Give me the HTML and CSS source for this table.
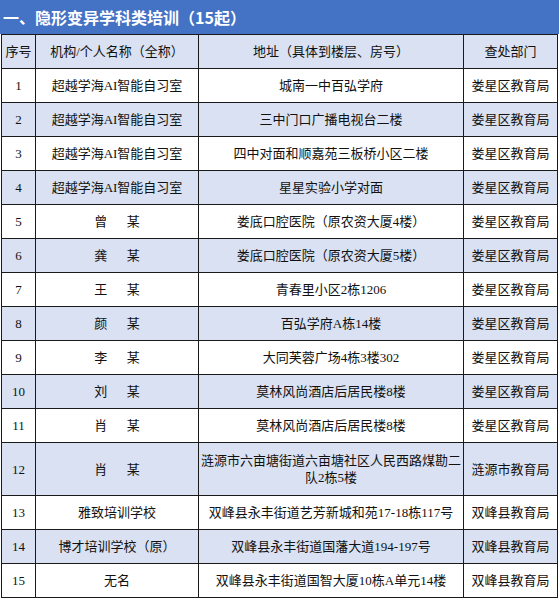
FILE: index.html
```html
<!DOCTYPE html>
<html lang="zh">
<head>
<meta charset="utf-8">
<link rel="stylesheet" href="styles.css">
</head>
<body>
<div class="title">一、隐形变异学科类培训（15起）</div>
<table class="list">
  <colgroup>
    <col class="c-no"><col class="c-name"><col class="c-addr"><col class="c-dept">
  </colgroup>
  <tr class="head"><td>序号</td><td>机构/个人名称（全称）</td><td>地址（具体到楼层、房号）</td><td>查处部门</td></tr>
  <tr><td>1</td><td>超越学海AI智能自习室</td><td>城南一中百弘学府</td><td>娄星区教育局</td></tr>
  <tr class="alt"><td>2</td><td>超越学海AI智能自习室</td><td>三中门口广播电视台二楼</td><td>娄星区教育局</td></tr>
  <tr><td>3</td><td>超越学海AI智能自习室</td><td>四中对面和顺嘉苑三板桥小区二楼</td><td>娄星区教育局</td></tr>
  <tr class="alt"><td>4</td><td>超越学海AI智能自习室</td><td>星星实验小学对面</td><td>娄星区教育局</td></tr>
  <tr><td>5</td><td>曾　&nbsp;&nbsp;某</td><td>娄底口腔医院（原农资大厦4楼）</td><td>娄星区教育局</td></tr>
  <tr class="alt"><td>6</td><td>龚　&nbsp;&nbsp;某</td><td>娄底口腔医院（原农资大厦5楼）</td><td>娄星区教育局</td></tr>
  <tr><td>7</td><td>王　&nbsp;&nbsp;某</td><td>青春里小区2栋1206</td><td>娄星区教育局</td></tr>
  <tr class="alt"><td>8</td><td>颜　&nbsp;&nbsp;某</td><td>百弘学府A栋14楼</td><td>娄星区教育局</td></tr>
  <tr><td>9</td><td>李　&nbsp;&nbsp;某</td><td>大同芙蓉广场4栋3楼302</td><td>娄星区教育局</td></tr>
  <tr class="alt"><td>10</td><td>刘　&nbsp;&nbsp;某</td><td>莫林风尚酒店后居民楼8楼</td><td>娄星区教育局</td></tr>
  <tr><td>11</td><td>肖　&nbsp;&nbsp;某</td><td>莫林风尚酒店后居民楼8楼</td><td>娄星区教育局</td></tr>
  <tr class="alt tall"><td>12</td><td>肖　&nbsp;&nbsp;某</td><td>涟源市六亩塘街道六亩塘社区人民西路煤勘二<br>队2栋5楼</td><td>涟源市教育局</td></tr>
  <tr><td>13</td><td>雅致培训学校</td><td>双峰县永丰街道艺芳新城和苑17-18栋117号</td><td>双峰县教育局</td></tr>
  <tr class="alt"><td>14</td><td>博才培训学校（原）</td><td>双峰县永丰街道国藩大道194-197号</td><td>双峰县教育局</td></tr>
  <tr><td>15</td><td>无名</td><td>双峰县永丰街道国智大厦10栋A单元14楼</td><td>双峰县教育局</td></tr>
</table>
</body>
</html>
```

FILE: styles.css
```css
html, body {
  margin: 0;
  padding: 0;
  background: #ffffff;
}
body {
  width: 559px;
  height: 598px;
  overflow: hidden;
}
.title {
  height: 34px;
  box-sizing: border-box;
  background: #4472c4;
  color: #ffffff;
  font-family: "Noto Sans CJK SC", sans-serif;
  font-weight: bold;
  font-size: 16px;
  line-height: 34px;
  padding-left: 3px;
  white-space: nowrap;
}
.list {
  border-collapse: collapse;
  table-layout: fixed;
  width: 556px;
  margin-left: 1px;
  font-family: "Liberation Serif", "Noto Sans CJK SC", serif;
  font-size: 13px;
  color: #111111;
}
.c-no { width: 34px; }
.c-name { width: 163px; }
.c-addr { width: 265px; }
.c-dept { width: 94px; }
.list td {
  border: 1px solid #1a1a1a;
  padding: 0;
  height: 33px;
  line-height: 17px;
  text-align: center;
  vertical-align: middle;
  white-space: nowrap;
}
.list tr.tall td {
  height: 52px;
}
.head td,
.alt td {
  background: #d9e1f2;
}
```
